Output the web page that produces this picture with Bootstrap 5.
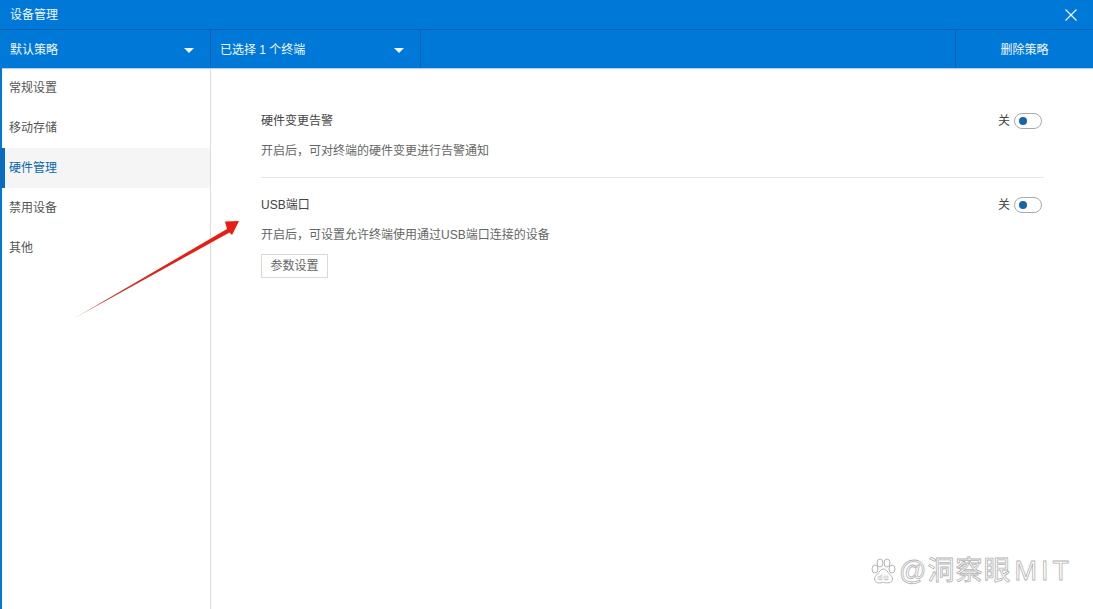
<!DOCTYPE html>
<html lang="zh"><head><meta charset="utf-8"><title>设备管理</title>
<link href="https://cdn.jsdelivr.net/npm/bootstrap@5.3.0/dist/css/bootstrap.min.css" rel="stylesheet">
<style>
html,body{height:100%;overflow:hidden}
body{font-family:"Liberation Sans","Noto Sans CJK SC",sans-serif;font-size:12px;color:#444;background:#fff;position:relative}
.app{height:609px;width:1093px}
.titlebar{height:30px;background:#0078d7;color:#f2f8fd;padding-left:10px;border-bottom:1px solid #0761b0}
.close-x{width:44px}
.toolbar{height:38px;background:#0078d7;color:#f2f8fd;box-shadow:0 1px 1px rgba(0,60,120,.25);padding-top:0}
.tb-cell{padding:2px 10px 0;border-right:1px solid #0761b0}
.tb-a{width:211px;padding-right:16px}
.tb-b{width:210px;padding-left:9px;padding-right:16px}
.tb-del{width:138px;border-left:1px solid #0761b0;border-right:0;padding:2px 0 0}
.caret{width:0;height:0;border-left:5px solid transparent;border-right:5px solid transparent;border-top:5px solid #f2f8fd}
.sidebar{width:211px;border-right:1px solid #dcdcdc;border-left:2px solid #0078d7}
.side-item{height:40px;padding-left:7px;color:#555}
.side-item.active{background:#f5f5f5;color:#0767ab;border-left:5px solid #0a6cc0;margin-left:-2px;padding-left:4px;width:calc(100% + 2px)}
.main{padding:43px 49px 0 50px}
.setting-title{height:20px;color:#444}
.setting-desc{color:#666;margin-top:10px;height:20px}
.divider{border-top:1px solid #e8e8e8;margin:16px 0 17px}
.state{color:#444;margin-right:4px}
.toggle{width:28px;height:16px;border:1px solid #a9a9a9;border-radius:8px;margin-right:2px;padding-left:4px}
.toggle i{display:block;width:8px;height:8px;border-radius:50%;background:#1565ad}
.param-btn{height:24px;width:67px;margin-top:9px;border:1px solid #d9d9d9;border-radius:0;color:#666;background:#fff;font-size:12px;padding:0}
.arrow{position:absolute;left:70px;top:215px;pointer-events:none}
.watermark{position:absolute;left:870px;top:553px;gap:2px;font-size:27px;line-height:36px;color:#fff;-webkit-text-stroke:.8px #b4b4b4;letter-spacing:1px}
.wm-latin{letter-spacing:4px;margin-left:3px}
</style></head><body>
<div class="app d-flex flex-column">
  <div class="titlebar d-flex align-items-center justify-content-between">
    <span>设备管理</span>
    <span class="close-x d-flex justify-content-center">
      <svg width="12" height="12" viewBox="0 0 12 12"><path d="M.5.5l11 11M11.5.5l-11 11" stroke="#f2f8fd" stroke-width="1.2" fill="none"/></svg>
    </span>
  </div>
  <div class="toolbar d-flex">
    <div class="tb-cell tb-a d-flex align-items-center justify-content-between"><span>默认策略</span><span class="caret"></span></div>
    <div class="tb-cell tb-b d-flex align-items-center justify-content-between"><span>已选择 1 个终端</span><span class="caret"></span></div>
    <div class="flex-grow-1"></div>
    <div class="tb-cell tb-del d-flex align-items-center justify-content-center">删除策略</div>
  </div>
  <div class="d-flex flex-grow-1">
    <div class="sidebar">
      <div class="side-item d-flex align-items-center">常规设置</div>
      <div class="side-item d-flex align-items-center">移动存储</div>
      <div class="side-item active d-flex align-items-center">硬件管理</div>
      <div class="side-item d-flex align-items-center">禁用设备</div>
      <div class="side-item d-flex align-items-center">其他</div>
    </div>
    <div class="main flex-grow-1">
      <div class="setting-title d-flex align-items-center justify-content-between">
        <span>硬件变更告警</span>
        <span class="d-flex align-items-center"><span class="state">关</span><span class="toggle d-flex align-items-center"><i></i></span></span>
      </div>
      <div class="setting-desc d-flex align-items-center">开启后，可对终端的硬件变更进行告警通知</div>
      <div class="divider"></div>
      <div class="setting-title d-flex align-items-center justify-content-between">
        <span>USB端口</span>
        <span class="d-flex align-items-center"><span class="state">关</span><span class="toggle d-flex align-items-center"><i></i></span></span>
      </div>
      <div class="setting-desc d-flex align-items-center">开启后，可设置允许终端使用通过USB端口连接的设备</div>
      <button type="button" class="btn param-btn d-block">参数设置</button>
    </div>
  </div>
</div>
<svg class="arrow" width="175" height="110" viewBox="70 215 175 110">
  <defs><linearGradient id="g" gradientUnits="userSpaceOnUse" x1="72" y1="319" x2="238" y2="221"><stop offset="0" stop-color="#d8a89e"/><stop offset=".2" stop-color="#c23c30"/><stop offset=".55" stop-color="#dc2418"/><stop offset="1" stop-color="#ea1c10"/></linearGradient></defs>
  <path d="M73 319L227 229L225 221.500L239 221L232 235L229.500 232.500Z" fill="url(#g)"/>
</svg>
<div class="watermark d-flex align-items-center">
  <svg width="27" height="27" viewBox="0 0 27 27" fill="#fff" stroke="#b4b4b4"><ellipse cx="5" cy="11" rx="3" ry="4"/><ellipse cx="10" cy="5" rx="3" ry="4"/><ellipse cx="17" cy="5" rx="3" ry="4"/><ellipse cx="22" cy="11" rx="3" ry="4"/><path d="M13.500 11c-3 0-4 3-6 5s-3 3-3 5c0 3 3 4 5 4 2 0 3-.7 4-.7s2 .7 4 .7 5-1 5-4c0-2-1-3-3-5s-3-5-6-5z"/><text x="13.500" y="22" text-anchor="middle" font-size="8" font-weight="700" stroke-width=".4" font-family="Liberation Sans,sans-serif">du</text></svg>
  <span>@洞察眼<span class="wm-latin">MIT</span></span>
</div>
<script src="https://cdn.jsdelivr.net/npm/bootstrap@5.3.0/dist/js/bootstrap.bundle.min.js"></script>
</body></html>
